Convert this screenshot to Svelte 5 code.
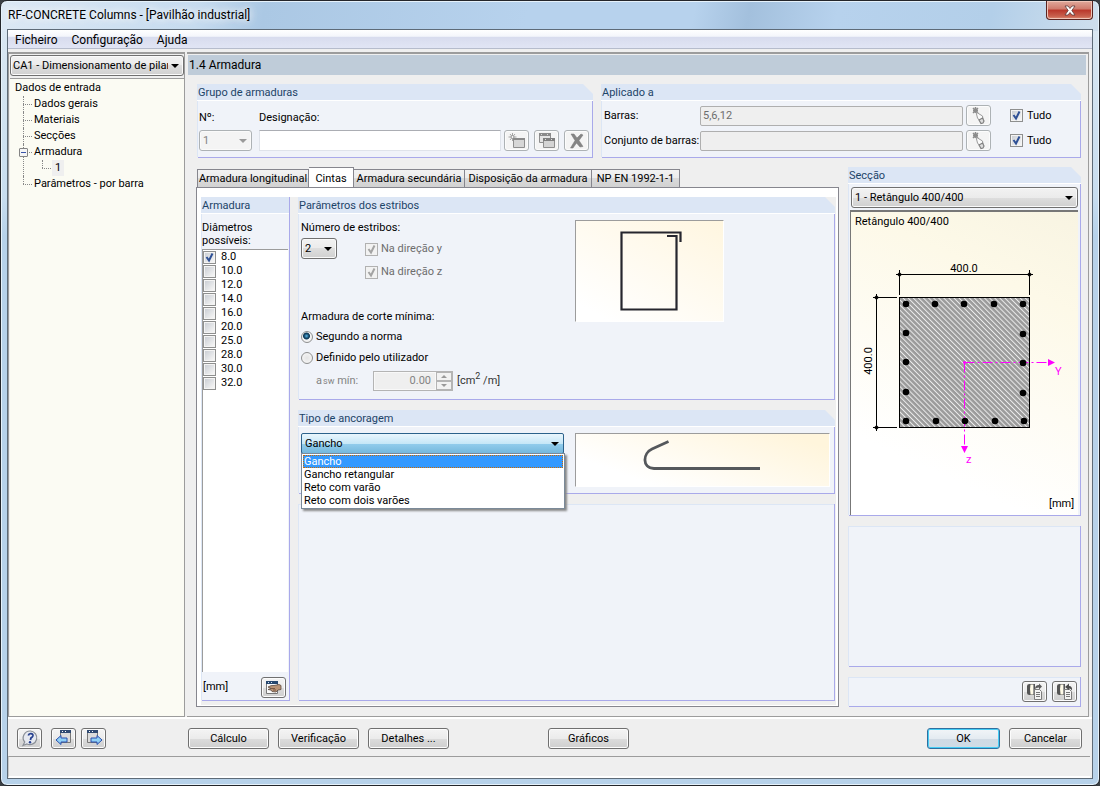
<script lang="ts">
  const diameters = ['8.0', '10.0', '12.0', '14.0', '16.0', '20.0', '25.0', '28.0', '30.0', '32.0'];
  const tabs = ['Armadura longitudinal', 'Cintas', 'Armadura secundária', 'Disposição da armadura', 'NP EN 1992-1-1'];
  const anchorages = ['Gancho', 'Gancho retangular', 'Reto com varão', 'Reto com dois varões'];
  const bars = [
    [55, 93], [84, 93], [113, 93], [143, 93], [172, 93],
    [55, 122], [55, 151], [55, 181], [55, 210],
    [172, 123], [172, 152], [172, 182], [173, 210],
    [85, 210], [114, 210], [144, 210]
  ];
</script>

{#snippet pickIcon()}
  <svg width="16" height="18" viewBox="0 0 16 18" aria-hidden="true">
    <path d="M2 1l5 5M7 1L2 6M4.500 0v6M2 3.500h5" stroke="#8c8c8c" stroke-width="1.500" />
    <path d="M5 5l6.500 4 .5 3-3 2-2.500-3z" fill="#fafafa" stroke="#9a9a9a" />
    <path d="M8 13l3.500-2 1.500 3-1 2-2 .5z" fill="#ddd" stroke="#808080" stroke-width="1.200" />
  </svg>
{/snippet}

{#snippet docIcon(up: boolean)}
  <svg width="19" height="17" viewBox="0 0 19 17" aria-hidden="true">
    <path d="M2 3q0-2 2.500-2H10v11H4.500Q2 12 2 10z" fill="#555" />
    <path d="M5.500 1.500Q4.500 6 5.500 11.500h2.500V1.500z" fill="#fffbe8" />
    <path d="M8.500 1.500v10" stroke="#9a9a9a" />
    <path d="M9.500 6.500h5l2 2v8H9.500z" fill="#f4f4f4" stroke="#7c7c7c" />
    <path d="M11 9.500h4M11 11.500h4M11 13.500h4" stroke="#777" />
    {#if up}
      <path d="M10 4l4-3.500V3q3.500 0 3 4.500-1-2-3-2V7z" fill="#4c4c4c" />
    {:else}
      <path d="M10 6Q10 2 14 2V.5L17 3.500 14 6.500V4.500Q11 4.500 10 6z" fill="#5c5c5c" />
    {/if}
  </svg>
{/snippet}

<div class="window">
  <header class="titlebar">
    <h1>RF-CONCRETE Columns - [Pavilhão industrial]</h1>
    <button class="close" aria-label="Fechar">
      <svg width="12" height="11" viewBox="0 0 12 11" aria-hidden="true">
        <path d="M1 1h3l2 2.500L8 1h3L7.800 5.500 11 10H8L6 7.500 4 10H1l3.200-4.500z" fill="#fff" stroke="#5b3a3a" stroke-width=".8" />
      </svg>
    </button>
  </header>

  <div class="client">
    <nav class="menu">
      <button>Ficheiro</button>
      <button>Configuração</button>
      <button>Ajuda</button>
    </nav>

    <div class="work">
      <aside class="sidebar">
        <div class="select">
          <select aria-label="Caso"><option>CA1 - Dimensionamento de pilar</option></select>
        </div>
        <div class="tree">
          <a href="#top">Dados de entrada</a>
          <ul>
            <li><a href="#gerais">Dados gerais</a></li>
            <li><a href="#materiais">Materiais</a></li>
            <li><a href="#seccoes">Secções</a></li>
            <li class="open">
              <button class="toggle" aria-label="Recolher"></button>
              <a href="#armadura">Armadura</a>
              <ul>
                <li><a class="current" href="#armadura-1">1</a></li>
              </ul>
            </li>
            <li><a href="#parametros">Parâmetros - por barra</a></li>
          </ul>
        </div>
      </aside>

      <main class="page">
        <h2 class="heading">1.4 Armadura</h2>

        <div class="top">
          <section class="group">
            <h3>Grupo de armaduras</h3>
            <div class="body designation">
              <label for="num">Nº:</label>
              <label class="wide-label" for="desc">Designação:</label>
              <div class="select disabled">
                <select id="num" disabled><option>1</option></select>
              </div>
              <input id="desc" class="field" type="text" />
              <div class="buttons">
                <button class="btn icon" disabled aria-label="Novo">
                  <svg width="18" height="16" viewBox="0 0 18 16" aria-hidden="true">
                    <path d="M4.500 0v8M.5 4h8M2 1l5 6M7 1L2 7" stroke="#a4a4a4" />
                    <circle cx="4.500" cy="4" r="1.500" fill="#f4f4f4" stroke="#999" />
                    <path d="M5.500 5.500h11v9h-11z" fill="#d6d6d6" stroke="#8e8e8e" />
                    <path d="M5 5h12v2H5z" fill="#8a8a8a" />
                  </svg>
                </button>
                <button class="btn icon" disabled aria-label="Copiar">
                  <svg width="18" height="16" viewBox="0 0 18 16" aria-hidden="true">
                    <path d="M1.500 .5h11v9h-11z" fill="#e4e4e4" stroke="#8e8e8e" />
                    <path d="M1 0h12v3H1z" fill="#8a8a8a" />
                    <path d="M5.500 5.500h11v9h-11z" fill="#d4d4d4" stroke="#8e8e8e" />
                    <path d="M5 5h12v3H5z" fill="#7f7f7f" />
                    <path d="M3 1.500h1M9 1.500h1M7 6.500h1M13 6.500h1" stroke="#ddd" />
                  </svg>
                </button>
                <button class="btn icon" disabled aria-label="Eliminar">
                  <svg width="16" height="16" viewBox="0 0 16 16" aria-hidden="true">
                    <path d="M2 1l3 0 3 4 4-4 2 1-4 5.500 4 6-3 .5-3.500-4L4 15H1.500L6 7.500z" fill="#858585" stroke="#777" stroke-width=".5" />
                  </svg>
                </button>
              </div>
            </div>
          </section>

          <section class="group">
            <h3>Aplicado a</h3>
            <div class="body applied">
              <label for="bars">Barras:</label>
              <input id="bars" class="field" type="text" value="5,6,12" disabled />
              <button class="btn icon" disabled aria-label="Selecionar barras">{@render pickIcon()}</button>
              <label class="check"><input type="checkbox" checked />Tudo</label>
              <label for="sets">Conjunto de barras:</label>
              <input id="sets" class="field" type="text" disabled />
              <button class="btn icon" disabled aria-label="Selecionar conjunto">{@render pickIcon()}</button>
              <label class="check"><input type="checkbox" checked />Tudo</label>
            </div>
          </section>
        </div>

        <div class="lower">
          <div class="tabbed">
            <div class="tabs" role="tablist">
              {#each tabs as tab}
                <button role="tab" class:active={tab === 'Cintas'} aria-selected={tab === 'Cintas'}>{tab}</button>
              {/each}
            </div>
            <div class="sheet">
              <section class="group square diam">
                <h3>Armadura</h3>
                <div class="body">
                  <p>Diâmetros possíveis:</p>
                  <div class="list">
                    {#each diameters as d, i}
                      <label class="check"><input type="checkbox" checked={i === 0} />{d}</label>
                    {/each}
                  </div>
                  <div class="unit">
                    <span>[mm]</span>
                    <button class="btn icon" aria-label="Editar diâmetros">
                      <svg width="18" height="15" viewBox="0 0 18 15" aria-hidden="true">
                        <path d="M1.500 1.500h11v12h-11z" fill="#fafafa" stroke="#777" />
                        <path d="M1 1h12v3H1z" fill="#27486f" />
                        <path d="M3 2.500h1M6 2.500h1" stroke="#cfe0f3" />
                        <path d="M3 7q3-2 6-1.500l5-1 2 1v4l-3 .5-2 2-4-.5-1-1.500-3-.5 3-1z" fill="#b99375" stroke="#5d4a40" stroke-width=".8" />
                        <path d="M6 8.500h4M8 10h3" stroke="#6b4a36" stroke-width=".8" />
                      </svg>
                    </button>
                  </div>
                </div>
              </section>

              <div class="stack">
                <section class="group">
                  <h3>Parâmetros dos estribos</h3>
                  <div class="body split params">
                    <div>
                      <label class="count" for="count">Número de estribos:</label>
                      <div class="stirrups">
                        <div class="select">
                          <select id="count"><option>2</option></select>
                        </div>
                        <div class="dirs">
                          <label class="check"><input type="checkbox" checked disabled />Na direção y</label>
                          <label class="check"><input type="checkbox" checked disabled />Na direção z</label>
                        </div>
                      </div>
                      <p class="minimum">Armadura de corte mínima:</p>
                      <div class="radios">
                        <label class="check"><input type="radio" name="min" checked />Segundo a norma</label>
                        <label class="check"><input type="radio" name="min" />Definido pelo utilizador</label>
                      </div>
                      <div class="asw">
                        <label for="asw">a<small>sw</small> mín:</label>
                        <div class="spin">
                          <input id="asw" type="text" value="0.00" disabled />
                          <span>
                            <button disabled aria-label="Aumentar"></button>
                            <button class="down" disabled aria-label="Diminuir"></button>
                          </span>
                        </div>
                        <span class="unit-text">[cm<sup>2</sup> /m]</span>
                      </div>
                    </div>
                    <div class="picture stirrup">
                      <svg width="147" height="100" viewBox="0 0 147 100" aria-hidden="true">
                        <path d="M104.500 21V11.500H45.500v77h55v-73.500H91" fill="none" stroke="#26262e" stroke-width="2.200" />
                      </svg>
                    </div>
                  </div>
                </section>

                <section class="group">
                  <h3>Tipo de ancoragem</h3>
                  <div class="body split anchor">
                    <div class="combo">
                      <div class="select hot">
                        <select aria-label="Tipo de ancoragem">
                          {#each anchorages as a}<option>{a}</option>{/each}
                        </select>
                      </div>
                      <ul class="popup" role="listbox">
                        {#each anchorages as a, i}
                          <li role="option" aria-selected={i === 0}>{a}</li>
                        {/each}
                      </ul>
                    </div>
                    <div class="picture hook">
                      <svg width="253" height="52" viewBox="0 0 253 52" aria-hidden="true">
                        <path d="M92.500 7.500L76 15C67 19 65.500 34 78 34.500H184" fill="none" stroke="#55585c" stroke-width="2.800" />
                      </svg>
                    </div>
                  </div>
                </section>

                <section class="group square grow"><div class="body"></div></section>
              </div>
            </div>
          </div>

          <div class="right">
            <section class="group">
              <h3>Secção</h3>
              <div class="body">
                <div class="select">
                  <select aria-label="Secção"><option>1 - Retângulo 400/400</option></select>
                </div>
                <div class="canvas">
                  <svg height="303" viewBox="0 1 227 303" preserveAspectRatio="xMinYMin">
                    <defs>
                      <pattern id="hatch" width="3.600" height="3.600" patternUnits="userSpaceOnUse" patternTransform="rotate(-45)">
                        <rect width="3.600" height="3.600" fill="#9b9b9b" />
                        <rect width="1" height="3.600" fill="#ececec" />
                      </pattern>
                    </defs>
                    <text x="4" y="14">Retângulo 400/400</text>
                    <rect x="48.500" y="86.500" width="130" height="130" fill="url(#hatch)" stroke="#000" />
                    <g stroke="#000" fill="none">
                      <path d="M45 63.500h137M48.500 59v25M178.500 59v25" />
                      <path d="M25.500 83v137M22 86.500h24M22 216.500h24" />
                    </g>
                    <path d="M48.500 61l2.500 2.500-2.500 2.500-2.500-2.500zM178.500 61l2.500 2.500-2.500 2.500-2.500-2.500zM25.500 84l2.500 2.500-2.500 2.500-2.500-2.500zM25.500 214l2.500 2.500-2.500 2.500-2.500-2.500z" />
                    <text x="113" y="61" text-anchor="middle">400.0</text>
                    <text transform="translate(21 150) rotate(-90)" text-anchor="middle">400.0</text>
                    <path d="M113.500 151.500H198M113.500 151.500V236" stroke="#f0f" stroke-dasharray="10 3 2 3" fill="none" />
                    <path d="M197 148v7l7-3.500zM110 235h7l-3.500 7z" fill="#f0f" />
                    <circle cx="113.500" cy="151.500" r="1.500" fill="#f0f" />
                    {#each bars as [x, y]}
                      <circle cx={x} cy={y} r="3.300" />
                    {/each}
                    <text class="axis" x="204" y="164">Y</text>
                    <text class="axis" x="115" y="252">z</text>
                    <text x="198" y="296">[mm]</text>
                  </svg>
                </div>
              </div>
            </section>
            <section class="group square grow"><div class="body"></div></section>
            <section class="group square">
              <div class="body tools">
                <button class="btn icon" aria-label="Importar">{@render docIcon(false)}</button>
                <button class="btn icon" aria-label="Exportar">{@render docIcon(true)}</button>
              </div>
            </section>
          </div>
        </div>
      </main>
    </div>

    <footer class="actions">
      <div class="nav">
        <button class="btn icon" aria-label="Ajuda">
          <svg width="18" height="17" viewBox="0 0 18 17" aria-hidden="true">
            <path d="M9.500 1a7 6.800 0 1 1-3.500 13L2 15.500 3.700 12A7 6.800 0 0 1 9.500 1z" fill="#e6e9f0" stroke="#8a8f96" stroke-width="1.200" />
            <path d="M7.300 5.500q.5-2 2.700-1.800 2.200.3 1.900 2.200-.3 1.300-1.900 2l-.6 2" fill="none" stroke="#27408f" stroke-width="1.800" />
            <circle cx="9" cy="12.300" r="1.200" fill="#27408f" />
          </svg>
        </button>
        <button class="btn icon" aria-label="Anterior">
          <svg width="18" height="17" viewBox="0 0 18 17" aria-hidden="true">
            <path d="M5.500 1.500h10v11h-10z" fill="#dcdcdc" stroke="#777" />
            <path d="M5 0h11v3H5z" fill="#304a72" />
            <path d="M7 1.500h1M10 1.500h1" stroke="#fff" />
            <path d="M1 10l5-4.500V8h6v4H6v2.500z" fill="#8fd0f5" stroke="#2a4fae" />
          </svg>
        </button>
        <button class="btn icon" aria-label="Seguinte">
          <svg width="18" height="17" viewBox="0 0 18 17" aria-hidden="true">
            <path d="M2.500 1.500h10v11h-10z" fill="#dcdcdc" stroke="#777" />
            <path d="M2 0h11v3H2z" fill="#304a72" />
            <path d="M4 1.500h1M7 1.500h1" stroke="#fff" />
            <path d="M17 10l-5-4.500V8H6v4h6v2.500z" fill="#8fd0f5" stroke="#2a4fae" />
          </svg>
        </button>
      </div>
      <button class="btn">Cálculo</button>
      <button class="btn">Verificação</button>
      <button class="btn">Detalhes ...</button>
      <button class="btn graphs">Gráficos</button>
      <button class="btn ok">OK</button>
      <button class="btn cancel">Cancelar</button>
    </footer>
    <div class="status"></div>
  </div>
</div>

<style>
  :global(body) { margin: 0; background: #3a3f44; }
  * { box-sizing: border-box; }
  .window {
    --grey: #9c9c9c;
    min-height: 100vh;
    display: flex;
    flex-direction: column;
    padding: 0 6px 6px;
    border: 1px solid #24262b;
    border-radius: 7px;
    background:
      linear-gradient(100deg, #dce8f4 0, #c6dbef 18%, #abc8e4 24%, #b7d2ed 48%, #b7d2ed 63%, #a3c0dd 68%, #b7d2ed 76%, #b3cfe9 90%, #cfdfed 100%) 0 0 / 100% 30px no-repeat,
      linear-gradient(#dce8f2, #c8ddef 25%, #b7d2ea 30%, #b7d2ea);
    box-shadow: inset 0 0 0 1px #e6f2fb;
    font: 11px/16px Roboto, "Liberation Sans", sans-serif;
    color: #000;
  }
  h1, h2, h3, p, ul { margin: 0; padding: 0; font-weight: normal; }
  ul { list-style: none; }
  button, input, select { font: inherit; color: inherit; margin: 0; padding: 0; }
  a { color: inherit; text-decoration: none; }
  svg { display: block; }

  .titlebar { height: 28px; display: flex; justify-content: space-between; align-items: flex-start; }
  .titlebar h1 { font-size: 12px; line-height: 28px; text-shadow: 0 0 8px #fff, 0 0 8px #fff; padding-left: 1px; }
  .close {
    width: 47px; height: 19px; display: grid; place-items: center;
    border: 1px solid #5a2420; border-top: 0; border-radius: 0 0 4px 4px;
    background: linear-gradient(#e0a99c, #cf7a6c 45%, #b9362a 50%, #c8614e 85%, #e08e76);
    box-shadow: inset 0 0 0 1px #f0c5b8;
  }
  .client { flex: 1; display: flex; flex-direction: column; background: #efefef; border: 1px solid #5e6b78; }
  .menu {
    display: flex; height: 19px; padding-left: 7px; gap: 14px;
    background: linear-gradient(#fff 0, #f4f6fb 35%, #d8dcee 40%, #e1e5f4);
    border-bottom: 1px solid #b6bccc;
  }
  .menu button { border: 0; background: none; font-size: 12px; line-height: 20px; }

  .work { flex: 1; display: flex; margin-top: 3px; border-bottom: 2px solid #fff; }
  .sidebar {
    width: 177px; display: flex; flex-direction: column; padding: 1px 0 0 1px; margin-right: 1px;
    border: 1px solid var(--grey); border-top: 2px solid var(--grey);
  }
  .sidebar select { padding-right: 15px; }
  .tree { flex: 1; margin-top: 2px; padding: 1px 0 0 5px; border-top: 1px solid var(--grey); background: #fbfbf3; }
  .tree a { display: inline-block; vertical-align: top; }
  .tree li { position: relative; padding-left: 19px; }
  .tree li::before { content: ""; position: absolute; left: 8px; top: 8px; width: 9px; border-top: 1px dotted #888; }
  .tree li::after { content: ""; position: absolute; left: 8px; top: 0; bottom: 0; border-left: 1px dotted #888; }
  .tree li:last-child::after { bottom: auto; height: 8px; }
  .tree li li { padding-left: 18px; }
  .tree .current { padding: 0 3px; background: #efefef; }
  .toggle {
    position: absolute; left: 4px; top: 4px; z-index: 1; width: 9px; height: 9px;
    border: 1px solid #848484; border-radius: 1px;
    background: linear-gradient(#3a55a8, #3a55a8) center / 5px 1px no-repeat, #f5f5f5;
  }

  .page {
    flex: 1; min-width: 0; margin-left: 1px; display: flex; flex-direction: column; padding: 1px 1px 9px;
    border-top: 2px solid var(--grey); border-right: 1px solid var(--grey); border-bottom: 1px solid var(--grey);
    margin-right: 3px;
  }
  .heading { height: 20px; margin-right: 1px; padding-left: 1px; font-size: 12px; line-height: 20px; background: #bfccd9; }
  .top { display: grid; grid-template-columns: 396fr 480fr; gap: 8px; margin: 9px 6px 9px 9px; }

  .group {
    --cut: 10px;
    display: flex; flex-direction: column; padding: 0 1px 1px 0;
    background:
      linear-gradient(#a9a9ea, #a9a9ea) right bottom / 1px calc(100% - var(--cut)) no-repeat,
      linear-gradient(#a9a9ea, #a9a9ea) right bottom / calc(100% - 1px) 1px no-repeat;
  }
  .square { --cut: 0px; }
  .group h3 {
    height: 17px; padding-left: 1px; margin-right: -1px; font-size: 11px; line-height: 18px; color: #1c4468;
    background: #dce6f5; border-bottom: 1px solid #fff;
    clip-path: polygon(0 0, calc(100% - 10px) 0, 100% 10px, 100% 100%, 0 100%);
  }
  .square h3 { clip-path: none; margin-right: 0; }
  .body { flex: 1; background: #f0f3f9; border-left: 1px solid #dce6f5; }
  .square:not(.diam) > .body { border-top: 1px solid #dce6f5; }

  .select { position: relative; display: flex; height: 21px; }
  .select::after {
    content: ""; position: absolute; right: 5px; top: 9px; pointer-events: none;
    border: 4px solid transparent; border-top-color: #000; border-bottom: 0;
  }
  .select select {
    appearance: none; width: 100%; padding: 0 18px 0 3px; border: 1px solid #707070; border-radius: 3px;
    background: linear-gradient(#f2f2f2, #ebebeb 50%, #dedede 50%, #d0d0d0);
    box-shadow: inset 0 0 0 1px #fafafa;
  }
  .sidebar .select select { padding: 0 15px 0 2px; }
  .select.disabled select { opacity: 1; color: #838383; border-color: #adb2b5; background: #f4f4f4; }
  .select.disabled::after { border-top-color: #9a9a9a; }
  .select.hot select {
    border-color: #2c628b; border-radius: 2px;
    background: linear-gradient(#eaf6fd, #c6e7f7 50%, #93cdec 50%, #75b8dd);
    box-shadow: none;
  }

  .btn {
    width: 81px; height: 21px; border: 1px solid #707070; border-radius: 3px;
    background: linear-gradient(#f4f4f4, #ebebeb 50%, #dcdcdc 50%, #cfcfcf);
    box-shadow: inset 0 0 0 1px #fcfcfc;
  }
  .btn.icon { width: 25px; flex: none; display: grid; place-items: center; }
  .btn:disabled { border-color: #adb2b5; background: #f4f4f4; }

  .field { min-width: 0; width: 100%; height: 21px; padding: 0 2px; background: #fff; border: 1px solid #dfe3ea; border-top-color: #abadb3; }
  .field:disabled { height: 20px; background: #efefef; color: #6d6d6d; border: 1px solid #afafaf; border-radius: 2px; }

  .check { display: flex; align-items: center; gap: 3px; }
  .check input {
    appearance: none; flex: none; width: 13px; height: 13px; border: 1px solid #8e8f8f;
    background: linear-gradient(135deg, #cbcfd5, #f6f6f6) content-box, #f4f4f4; padding: 1px;
  }
  .check input[type="checkbox"]:checked {
    background: url("data:image/svg+xml,%3Csvg xmlns='http://www.w3.org/2000/svg' width='11' height='11'%3E%3Cpath d='M2.500 5l2.500 3.500L8.500 1.500' fill='none' stroke='%232f5196' stroke-width='2'/%3E%3C/svg%3E") center no-repeat border-box, linear-gradient(135deg, #cbcfd5, #f6f6f6) content-box, #f4f4f4;
  }
  .check input[type="checkbox"]:disabled {
    border-color: #b1b1b1;
    background: url("data:image/svg+xml,%3Csvg xmlns='http://www.w3.org/2000/svg' width='11' height='11'%3E%3Cpath d='M2.500 5l2.500 3.500L8.500 1.500' fill='none' stroke='%23a4a4a4' stroke-width='2'/%3E%3C/svg%3E") center no-repeat border-box, #f2f2f2;
  }
  .check:has(input:disabled) { color: #6d6d6d; }
  .check input[type="radio"] { width: 12px; height: 12px; border-radius: 50%; padding: 0; background: radial-gradient(#e4e4e4, #fafafa); }
  .check input[type="radio"]:checked { background: radial-gradient(circle at 45% 40%, #58b7e8 0, #12405f 30%, #12405f 38%, #f2f2f2 48%); }

  .designation { display: grid; grid-template-columns: 53px 1fr auto; grid-template-rows: 16px 21px; gap: 4px 7px; padding: 9px 3px 6px 1px; }
  .wide-label { grid-column: 2 / -1; }
  .buttons { display: flex; gap: 5px; margin-left: -4px; }
  .applied { display: grid; grid-template-columns: 93px 1fr 25px 86px; grid-auto-rows: 21px; gap: 4px 3px; align-items: center; padding: 4px 0 6px 2px; white-space: nowrap; }
  .applied .check { padding-left: 16px; gap: 4px; }

  .lower { flex: 1; display: grid; grid-template-columns: 1fr 233px; gap: 9px; margin: 0 6px 0 8px; }
  .tabbed { display: flex; flex-direction: column; }
  .tabs {
    display: grid; grid-template-columns: 112px 45px 111px 127px 88px; align-items: end;
    height: 21px; padding-left: 1px; margin-bottom: -1px;
  }
  .tabs button {
    height: 19px; padding: 1px 0 0; border: 1px solid #86868e; border-left-width: 0; white-space: nowrap;
    background: linear-gradient(#f2f2f2, #ebebeb 50%, #dadada 50%, #d2d2d2);
  }
  .tabs button:first-child { border-left-width: 1px; }
  .tabs .active { height: 21px; background: #fff; border-bottom: 0; }
  .sheet {
    flex: 1; display: grid; grid-template-columns: 89px 1fr; gap: 8px;
    padding: 9px 3px 5px 4px; border: 1px solid #86868e;
    background: linear-gradient(#fff, #fff) 0 0 / 100% 9px no-repeat, linear-gradient(#fff, #fff) 0 0 / 4px 100% no-repeat, #efefef;
    box-shadow: inset -2px -1px #fff;
  }
  .diam .body { display: flex; flex-direction: column; }
  .diam p { padding: 7px 12px 2px 0; line-height: 13px; }
  .list { flex: 1; margin-right: 1px; border-top: 1px solid var(--grey); border-left: 1px solid var(--grey); background: #fff; }
  .list .check { height: 14px; gap: 5px; }
  .unit { display: flex; justify-content: space-between; align-items: center; height: 28px; padding: 2px 3px 0 1px; }

  .stack, .right { display: flex; flex-direction: column; min-width: 0; gap: 10px; }
  .grow { flex: 1; }
  .split { display: grid; grid-template-columns: 263px 1fr; gap: 11px; padding: 0 4px 8px 2px; }
  .params { padding-top: 5px; }
  .anchor { padding: 5px 4px 6px 2px; }
  .count { display: block; padding-top: 1px; }
  .stirrups { display: flex; gap: 28px; margin-top: 2px; }
  .stirrups .select { width: 36px; }
  .dirs { display: grid; gap: 7px; padding-top: 3px; }
  .minimum { margin-top: 29px; }
  .radios { display: grid; gap: 5px; margin-top: 4px; }
  .asw { display: flex; align-items: center; margin-top: 5px; color: #838383; }
  .asw label { width: 72px; padding-left: 15px; }
  .asw small { font-size: 9px; margin-left: 1px; }
  .asw sup { font-size: 9px; line-height: 0; }
  .unit-text { color: #333; margin-left: 4px; }
  .spin { display: flex; width: 80px; height: 20px; border: 1px solid #b4b4b4; }
  .spin input { flex: 1; min-width: 0; border: 1px solid #f8f8f8; background: #efefef; text-align: right; padding-right: 4px; }
  .spin span { display: grid; width: 16px; }
  .spin button { position: relative; border: 1px solid #b4b4b4; background: #f2f2f2; }
  .spin button::after { content: ""; position: absolute; left: 4px; top: 2px; border: 3px solid transparent; border-bottom-color: #999; border-top: 0; }
  .spin .down::after { border: 3px solid transparent; border-top-color: #999; border-bottom: 0; }

  .picture { border: 1px solid #fff; border-top-color: var(--grey); border-left-color: var(--grey); }
  .stirrup { justify-self: start; align-self: start; margin-top: 1px; background: linear-gradient(30deg, #fff 10%, #fff6e0 100%); }
  .hook { margin-top: 1px; background: linear-gradient(20deg, #fff 20%, #fff5dc 90%); }

  .combo { position: relative; padding-top: 1px; }
  .popup {
    position: absolute; left: 0; right: -1px; top: 21px; z-index: 2; padding: 1px; line-height: 13px;
    background: #fff; border: 1px solid #7b8a99; box-shadow: 2px 2px 2px #888;
  }
  .popup li { padding-left: 1px; }
  .popup li[aria-selected="true"] { color: #fff; background: #3399ff; outline: 1px dotted #cc6a00; outline-offset: -1px; }

  .right .select { margin: 3px 2px 2px; }
  .canvas { margin: 0 2px 0 1px; border-top: 2px solid #777; border-left: 1px solid #777; background: linear-gradient(25deg, #fff 20%, #fdf9e8 75%, #f8f4e2); }
  .canvas svg { width: 100%; }
  .canvas text { font-size: 11px; }
  .canvas .axis { fill: #f0f; }
  .tools { display: flex; justify-content: flex-end; gap: 5px; padding: 3px 3px 4px; }

  .actions { display: flex; gap: 9px; align-items: center; height: 37px; padding: 2px 10px 0 9px; }
  .actions .nav { display: flex; width: 162px; gap: 5px; }
  .nav .icon:first-child { margin-right: 4px; }
  .graphs { margin-left: 90px; }
  .ok, .cancel { width: 73px; }
  .ok { margin-left: auto; border-color: #2f6f9f; background: linear-gradient(#f2f5f8, #e4ebf1 50%, #d0dae4 50%, #cfdce6); box-shadow: inset 0 0 0 1px #46cdf5; }
  .status { height: 22px; border-top: 1px solid var(--grey); border-bottom: 2px solid #fff; border-left: 1px solid #c8c8c8; margin-right: 2px; }
</style>
